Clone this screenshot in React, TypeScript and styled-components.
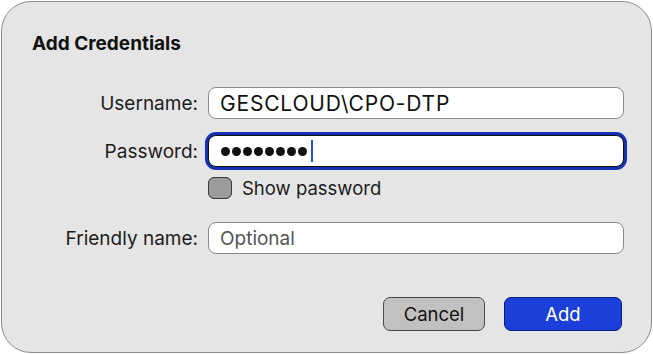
import React from "react";
import styled, { createGlobalStyle } from "styled-components";

const GlobalStyle = createGlobalStyle`
  html, body { margin: 0; padding: 0; background: #ffffff; }
  body {
    width: 653px;
    height: 354px;
    overflow: hidden;
    font-family: Inter, "Liberation Sans", Arial, sans-serif;
    color: #1a1a1a;
  }
`;

const Dialog = styled.div`
  box-sizing: border-box;
  margin: 1px 0 0 1px;
  width: 651px;
  height: 352px;
  background: #e5e5e5;
  border: 1px solid #8c8c8c;
  border-radius: 30px;
  padding: 28px 29px 21px 30px;
  display: flex;
  flex-direction: column;
`;

const Title = styled.h1`
  margin: 0;
  font-size: 19px;
  line-height: 28px;
  font-weight: 700;
  color: #111;
`;

const Form = styled.div`
  margin-top: 29px;
  display: grid;
  grid-template-columns: 166px 416px;
  column-gap: 10px;
  align-items: center;
`;

const Label = styled.label<{ $top?: number }>`
  justify-self: end;
  font-size: 19px;
  color: #1c1c1c;
  margin-top: ${(p) => p.$top ?? 0}px;
`;

const Field = styled.div<{ $top?: number; $focused?: boolean }>`
  box-sizing: border-box;
  height: 32px;
  margin-top: ${(p) => p.$top ?? 0}px;
  background: #ffffff;
  border: 1px solid ${(p) => (p.$focused ? "#111" : "#8a8a8a")};
  border-radius: 8px;
  padding: 0 11px;
  display: flex;
  align-items: center;
  font-size: 21px;
  letter-spacing: 0.8px;
  color: #111;
  box-shadow: ${(p) => (p.$focused ? "0 0 0 3px #1530b0" : "none")};
`;

const Placeholder = styled.span`
  color: #555;
  font-size: 19px;
  letter-spacing: 0;
`;

const Dots = styled.div`
  display: flex;
  align-items: center;
  gap: 2px;
  margin-left: 1px;
`;

const Dot = styled.span`
  width: 9px;
  height: 9px;
  border-radius: 50%;
  background: #111;
`;

const Caret = styled.span`
  width: 2px;
  height: 22px;
  margin-left: 4px;
  background: #2350e6;
`;

const CheckRow = styled.div`
  grid-column: 2;
  margin-top: 10px;
  display: flex;
  align-items: center;
  gap: 10px;
  font-size: 18.5px;
  color: #1c1c1c;
`;

const Box = styled.span`
  box-sizing: border-box;
  width: 24px;
  height: 22px;
  border-radius: 6px;
  background: #9b9b9b;
  border: 1px solid #3a3a3a;
`;

const Footer = styled.div`
  margin-top: auto;
  display: flex;
  justify-content: flex-end;
  gap: 19px;
`;

const Button = styled.button<{ $primary?: boolean; $w: number }>`
  box-sizing: border-box;
  width: ${(p) => p.$w}px;
  height: 34px;
  border-radius: 7px;
  font-family: inherit;
  font-size: 18.5px;
  border: 1px solid ${(p) => (p.$primary ? "#0a1f7a" : "#4a4a4a")};
  background: ${(p) => (p.$primary ? "#1c3fd9" : "#c1c1c1")};
  color: ${(p) => (p.$primary ? "#ffffff" : "#111")};
  padding: 0;
`;

export default function App() {
  return (
    <>
      <GlobalStyle />
      <Dialog>
        <Title>Add Credentials</Title>
        <Form>
          <Label>Username:</Label>
          <Field>GESCLOUD\CPO-DTP</Field>
          <Label $top={16}>Password:</Label>
          <Field $top={16} $focused>
            <Dots>
              {Array.from({ length: 8 }).map((_, i) => (
                <Dot key={i} />
              ))}
            </Dots>
            <Caret />
          </Field>
          <CheckRow>
            <Box />
            Show password
          </CheckRow>
          <Label $top={23}>Friendly name:</Label>
          <Field $top={23}>
            <Placeholder>Optional</Placeholder>
          </Field>
        </Form>
        <Footer>
          <Button $w={102}>Cancel</Button>
          <Button $w={118} $primary>
            Add
          </Button>
        </Footer>
      </Dialog>
    </>
  );
}
